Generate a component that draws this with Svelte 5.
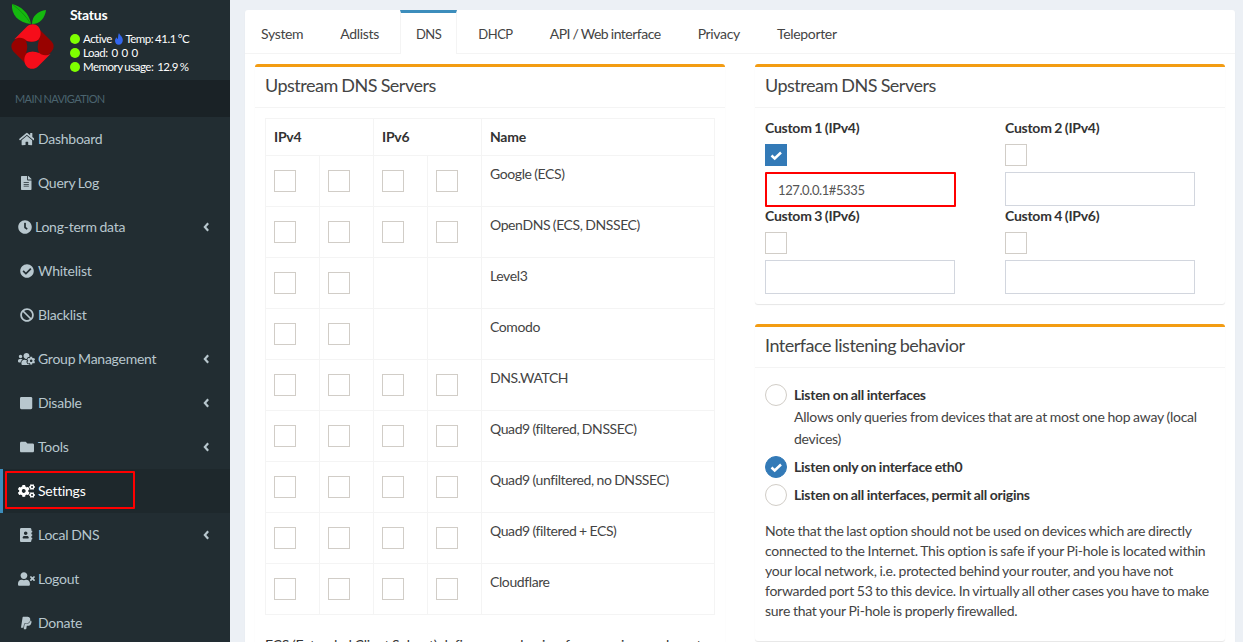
<script>
	const icons = {
		home: ['0 0 576 512', 'M280.37 148.26L96 300.11V464a16 16 0 0 0 16 16l112.06-.29a16 16 0 0 0 15.92-16V368a16 16 0 0 1 16-16h64a16 16 0 0 1 16 16v95.64a16 16 0 0 0 16 16.05L464 480a16 16 0 0 0 16-16V300L295.67 148.26a12.19 12.19 0 0 0-15.3 0zM571.6 251.47L488 182.56V44.05a12 12 0 0 0-12-12h-56a12 12 0 0 0-12 12v72.61L318.47 43a48 48 0 0 0-61 0L4.34 251.47a12 12 0 0 0-1.6 16.9l25.5 31A12 12 0 0 0 45.15 301l235.22-193.74a12.19 12.19 0 0 1 15.3 0L530.9 301a12 12 0 0 0 16.9-1.6l25.5-31a12 12 0 0 0-1.7-16.93z'],
		file: ['0 0 384 512', 'M224 136V0H24C10.7 0 0 10.7 0 24v464c0 13.3 10.7 24 24 24h336c13.3 0 24-10.7 24-24V160H248c-13.2 0-24-10.8-24-24zm64 236c0 6.6-5.4 12-12 12H108c-6.6 0-12-5.4-12-12v-8c0-6.6 5.4-12 12-12h168c6.6 0 12 5.4 12 12v8zm0-64c0 6.6-5.4 12-12 12H108c-6.6 0-12-5.4-12-12v-8c0-6.6 5.4-12 12-12h168c6.6 0 12 5.4 12 12v8zm0-72v8c0 6.6-5.4 12-12 12H108c-6.6 0-12-5.4-12-12v-8c0-6.6 5.4-12 12-12h168c6.6 0 12 5.4 12 12zm96-114.1v6.1H256V0h6.1c6.4 0 12.5 2.5 17 7l97.9 98c4.5 4.5 7 10.6 7 16.9z'],
		clock: ['0 0 512 512', 'M256,8C119,8,8,119,8,256S119,504,256,504,504,393,504,256,393,8,256,8Zm92.49,313h0l-20,25a16,16,0,0,1-22.49,2.5h0l-67-49.72a40,40,0,0,1-15-31.23V112a16,16,0,0,1,16-16h32a16,16,0,0,1,16,16V256l58,42.5A16,16,0,0,1,348.49,321Z'],
		check: ['0 0 512 512', 'M504 256c0 136.967-111.033 248-248 248S8 392.967 8 256 119.033 8 256 8s248 111.033 248 248zM227.314 387.314l184-184c6.248-6.248 6.248-16.379 0-22.627l-22.627-22.627c-6.248-6.249-16.379-6.249-22.628 0L216 308.118l-70.059-70.059c-6.248-6.248-16.379-6.248-22.628 0l-22.627 22.627c-6.248 6.248-6.248 16.379 0 22.627l104 104c6.249 6.249 16.379 6.249 22.628.001z'],
		ban: ['0 0 512 512', 'M256 8C119.034 8 8 119.033 8 256s111.034 248 248 248 248-111.034 248-248S392.967 8 256 8zm130.108 117.892c65.448 65.448 70 165.481 20.677 235.637L150.47 105.216c70.204-49.356 170.226-44.735 235.638 20.676zM125.892 386.108c-65.448-65.448-70-165.481-20.677-235.637L361.53 406.784c-70.203 49.356-170.226 44.736-235.638-20.676z'],
		users: ['0 0 640 512', 'M610.5 341.3c2.6-14.1 2.6-28.5 0-42.6l25.8-14.9c3-1.7 4.3-5.2 3.3-8.5-6.7-21.6-18.2-41.2-33.2-57.4-2.3-2.5-6-3.1-9-1.4l-25.8 14.9c-10.9-9.3-23.4-16.5-36.9-21.3v-29.8c0-3.4-2.4-6.4-5.7-7.1-22.3-5-45-4.8-66.2 0-3.3.7-5.7 3.7-5.7 7.1v29.8c-13.5 4.8-26 12-36.9 21.3l-25.8-14.9c-2.9-1.7-6.7-1.1-9 1.4-15 16.2-26.5 35.8-33.2 57.4-1 3.3.4 6.8 3.3 8.5l25.8 14.9c-2.6 14.1-2.6 28.5 0 42.6l-25.8 14.9c-3 1.7-4.3 5.2-3.3 8.5 6.7 21.6 18.2 41.1 33.2 57.4 2.3 2.5 6 3.1 9 1.4l25.8-14.9c10.9 9.3 23.4 16.5 36.9 21.3v29.8c0 3.4 2.4 6.4 5.7 7.1 22.3 5 45 4.8 66.2 0 3.3-.7 5.7-3.7 5.7-7.1v-29.8c13.5-4.8 26-12 36.9-21.3l25.8 14.9c2.9 1.7 6.7 1.1 9-1.4 15-16.2 26.5-35.8 33.2-57.4 1-3.3-.4-6.8-3.3-8.5l-25.8-14.9zM496 368.5c-26.8 0-48.5-21.8-48.5-48.5s21.8-48.5 48.5-48.5 48.5 21.8 48.5 48.5-21.7 48.5-48.5 48.5zM96 224c35.3 0 64-28.7 64-64s-28.7-64-64-64-64 28.7-64 64 28.7 64 64 64zm224 32c1.9 0 3.7-.5 5.6-.6 8.3-21.7 20.5-42.1 36.3-59.2 7.4-8 17.9-12.6 28.9-12.6 6.9 0 13.7 1.8 19.6 5.3l7.9 4.6c.8-.5 1.6-.9 2.4-1.4 7-14.6 11.2-30.8 11.2-48 0-61.9-50.1-112-112-112S208 82.1 208 144c0 61.9 50.1 112 112 112zm105.2 194.5c-2.3-1.2-4.6-2.6-6.8-3.9-8.2 4.8-15.3 9.8-27.5 9.8-10.9 0-21.4-4.6-28.9-12.6-18.3-19.8-32.3-43.9-40.2-69.6-10.7-34.5 24.9-49.7 25.8-50.3-.1-2.6-.1-5.2 0-7.8l-7.9-4.6c-3.8-2.2-7-5-9.8-8.1-3.3.2-6.5.6-9.8.6-24.6 0-47.6-6-68.5-16h-8.3C179.6 288 128 339.6 128 403.2V432c0 26.5 21.5 48 48 48h255.4c-3.7-6-6.2-12.8-6.2-20.3v-9.2zM173.1 274.6C161.5 263.1 145.6 256 128 256H64c-35.3 0-64 28.7-64 64v32c0 17.7 14.3 32 32 32h65.9c6.3-47.4 34.9-87.3 75.2-109.4z'],
		stop: ['0 0 448 512', 'M400 32H48C21.5 32 0 53.5 0 80v352c0 26.5 21.5 48 48 48h352c26.5 0 48-21.5 48-48V80c0-26.5-21.5-48-48-48z'],
		folder: ['0 0 512 512', 'M464 128H272l-64-64H48C21.49 64 0 85.49 0 112v288c0 26.51 21.49 48 48 48h416c26.51 0 48-21.49 48-48V176c0-26.51-21.49-48-48-48z'],
		cogs: ['0 0 640 512', 'M512.1 191l-8.2 14.3c-3 5.3-9.4 7.5-15.1 5.4-11.8-4.4-22.6-10.7-32.1-18.6-4.6-3.8-5.8-10.5-2.8-15.7l8.2-14.3c-6.9-8-12.3-17.3-15.9-27.4h-16.5c-6 0-11.2-4.3-12.2-10.3-2-12-2.1-24.6 0-37.1 1-6 6.2-10.4 12.2-10.4h16.5c3.6-10.1 9-19.4 15.9-27.4l-8.2-14.3c-3-5.2-1.9-11.9 2.8-15.7 9.5-7.9 20.4-14.2 32.1-18.6 5.7-2.1 12.1.1 15.1 5.4l8.2 14.3c10.5-1.9 21.2-1.9 31.7 0L552 6.3c3-5.3 9.4-7.5 15.1-5.4 11.8 4.4 22.6 10.7 32.1 18.6 4.6 3.8 5.8 10.5 2.8 15.7l-8.2 14.3c6.9 8 12.3 17.3 15.9 27.4h16.5c6 0 11.2 4.3 12.2 10.3 2 12 2.1 24.6 0 37.1-1 6-6.2 10.4-12.2 10.4h-16.5c-3.6 10.1-9 19.4-15.9 27.4l8.2 14.3c3 5.2 1.9 11.9-2.8 15.7-9.5 7.9-20.4 14.2-32.1 18.6-5.7 2.1-12.1-.1-15.1-5.4l-8.2-14.3c-10.4 1.9-21.2 1.9-31.7 0zm-10.5-58.8c38.5 29.6 82.4-14.3 52.8-52.8-38.5-29.7-82.4 14.3-52.8 52.8zM386.3 286.1l33.7 16.8c10.1 5.8 14.5 18.1 10.5 29.1-8.9 24.2-26.4 46.4-42.6 65.8-7.4 8.9-20.2 11.1-30.3 5.3l-29.1-16.8c-16 13.7-34.6 24.6-54.9 31.7v33.6c0 11.6-8.3 21.6-19.7 23.6-24.6 4.2-50.4 4.4-75.9 0-11.5-2-20-11.9-20-23.6V418c-20.3-7.2-38.9-18-54.9-31.7L74 403c-10 5.8-22.9 3.6-30.3-5.3-16.2-19.4-33.3-41.6-42.2-65.7-4-10.9.4-23.2 10.5-29.1l33.3-16.8c-3.9-20.9-3.9-42.4 0-63.4L12 205.8c-10.1-5.8-14.6-18.1-10.5-29 8.9-24.2 26-46.4 42.2-65.8 7.4-8.9 20.2-11.1 30.3-5.3l29.1 16.8c16-13.7 34.6-24.6 54.9-31.7V57.1c0-11.5 8.2-21.5 19.6-23.5 24.6-4.2 50.5-4.4 76-.1 11.5 2 20 11.9 20 23.6v33.6c20.3 7.2 38.9 18 54.9 31.7l29.1-16.8c10-5.8 22.9-3.6 30.3 5.3 16.2 19.4 33.2 41.6 42.1 65.8 4 10.9.1 23.2-10 29.1l-33.7 16.8c3.9 21 3.9 42.5 0 63.5zm-117.6 21.1c59.2-77-28.7-164.9-105.7-105.7-59.2 77 28.7 164.9 105.7 105.7zm243.4 182.7l-8.2 14.3c-3 5.3-9.4 7.5-15.1 5.4-11.8-4.4-22.6-10.7-32.1-18.6-4.6-3.8-5.8-10.5-2.8-15.7l8.2-14.3c-6.9-8-12.3-17.3-15.9-27.4h-16.5c-6 0-11.2-4.3-12.2-10.3-2-12-2.1-24.6 0-37.1 1-6 6.2-10.4 12.2-10.4h16.5c3.6-10.1 9-19.4 15.9-27.4l-8.2-14.3c-3-5.2-1.9-11.9 2.8-15.7 9.5-7.9 20.4-14.2 32.1-18.6 5.7-2.1 12.1.1 15.1 5.4l8.2 14.3c10.5-1.9 21.2-1.9 31.7 0l8.2-14.3c3-5.3 9.4-7.5 15.1-5.4 11.8 4.4 22.6 10.7 32.1 18.6 4.6 3.8 5.8 10.5 2.8 15.7l-8.2 14.3c6.9 8 12.3 17.3 15.9 27.4h16.5c6 0 11.2 4.3 12.2 10.3 2 12 2.1 24.6 0 37.1-1 6-6.2 10.4-12.2 10.4h-16.5c-3.6 10.1-9 19.4-15.9 27.4l8.2 14.3c3 5.2 1.9 11.9-2.8 15.7-9.5 7.9-20.4 14.2-32.1 18.6-5.7 2.1-12.1-.1-15.1-5.4l-8.2-14.3c-10.4 1.9-21.2 1.9-31.7 0zM501.6 431c38.5 29.6 82.4-14.3 52.8-52.8-38.5-29.6-82.4 14.3-52.8 52.8z'],
		book: ['0 0 448 512', 'M436 160c6.6 0 12-5.4 12-12v-40c0-6.6-5.4-12-12-12h-20V48c0-26.5-21.5-48-48-48H48C21.5 0 0 21.5 0 48v416c0 26.5 21.5 48 48 48h320c26.5 0 48-21.5 48-48v-48h20c6.6 0 12-5.4 12-12v-40c0-6.6-5.4-12-12-12h-20v-64h20c6.6 0 12-5.4 12-12v-40c0-6.6-5.4-12-12-12h-20v-64h20zm-228-32c35.3 0 64 28.7 64 64s-28.7 64-64 64-64-28.7-64-64 28.7-64 64-64zm112 236.8c0 10.6-10 19.2-22.4 19.2H118.4C106 384 96 375.4 96 364.8v-19.2c0-31.8 30.1-57.6 67.2-57.6h5c12.3 5.1 25.7 8 39.8 8s27.6-2.9 39.8-8h5c37.1 0 67.2 25.8 67.2 57.6v19.2z'],
		logout: ['0 0 640 512', 'M589.6 240l45.6-45.6c6.3-6.3 6.3-16.5 0-22.8l-22.8-22.8c-6.3-6.3-16.5-6.3-22.8 0L544 194.4l-45.6-45.6c-6.3-6.3-16.5-6.3-22.8 0L452.8 171.6c-6.3 6.3-6.3 16.5 0 22.8l45.6 45.6-45.6 45.6c-6.3 6.3-6.3 16.5 0 22.8l22.8 22.8c6.3 6.3 16.5 6.3 22.8 0l45.6-45.6 45.6 45.6c6.3 6.3 16.5 6.3 22.8 0l22.8-22.8c6.3-6.3 6.3-16.5 0-22.8L589.6 240zM224 256c70.7 0 128-57.3 128-128S294.7 0 224 0 96 57.3 96 128s57.3 128 128 128zm89.6 32h-16.7c-22.2 10.2-46.9 16-72.9 16s-50.6-5.8-72.9-16h-16.7C60.2 288 0 348.2 0 422.4V464c0 26.5 21.5 48 48 48h352c26.5 0 48-21.5 48-48v-41.6c0-74.2-60.2-134.4-134.4-134.4z'],
		paypal: ['0 0 384 512', 'M111.4 295.9c-3.5 19.2-17.4 108.7-21.5 134-.3 1.8-1 2.5-3 2.5H12.3c-7.6 0-13.1-6.6-12.1-13.9L58.8 46.6c1.5-9.6 10.1-16.9 20-16.9 152.3 0 165.1-3.7 204 11.4 60.1 23.3 65.6 79.5 44 140.3-21.5 62.6-72.5 89.5-140.1 90.3-43.4.7-69.5-7-75.3 24.2zM357.1 152c-1.8-1.3-2.5-1.8-3 1.3-2 11.4-5.1 22.5-8.8 33.6-39.9 113.8-150.5 103.9-204.5 103.9-6.1 0-10.1 3.3-10.9 9.4-22.6 140.4-27.1 169.7-27.1 169.7-1 7.1 3.5 12.9 10.6 12.9h63.5c8.6 0 15.7-6.3 17.4-14.9.7-5.4-1.1 6.1 14.4-91.3 4.6-22 14.3-19.7 29.3-19.7 71 0 126.4-28.8 142.9-112.3 6.5-34.8 4.6-71.4-23.8-92.6z']
	}

	const nav = [
		{ label: 'Dashboard', icon: 'home' },
		{ label: 'Query Log', icon: 'file' },
		{ label: 'Long-term data', icon: 'clock', more: true, narrow: true },
		{ label: 'Whitelist', icon: 'check' },
		{ label: 'Blacklist', icon: 'ban' },
		{ label: 'Group Management', icon: 'users', more: true },
		{ label: 'Disable', icon: 'stop', more: true },
		{ label: 'Tools', icon: 'folder', more: true },
		{ label: 'Settings', icon: 'cogs', active: true },
		{ label: 'Local DNS', icon: 'book', more: true },
		{ label: 'Logout', icon: 'logout' },
		{ label: 'Donate', icon: 'paypal' }
	]

	const tabs = [
		{ label: 'System' },
		{ label: 'Adlists' },
		{ label: 'DNS', caps: true },
		{ label: 'DHCP', caps: true },
		{ label: 'API / Web interface', tight: true },
		{ label: 'Privacy' },
		{ label: 'Teleporter' }
	]

	const servers = [
		['Google (ECS)', true],
		['OpenDNS (ECS, DNSSEC)', true],
		['Level3', false],
		['Comodo', false],
		['DNS.WATCH', true],
		['Quad9 (filtered, DNSSEC)', true],
		['Quad9 (unfiltered, no DNSSEC)', true],
		['Quad9 (filtered + ECS)', true],
		['Cloudflare', true]
	]

	const customs = [
		{ label: 'Custom 1 (IPv4)', value: '127.0.0.1#5335', on: true },
		{ label: 'Custom 2 (IPv4)', value: '' },
		{ label: 'Custom 3 (IPv6)', value: '' },
		{ label: 'Custom 4 (IPv6)', value: '' }
	]
</script>

<div class="page">
	<aside class="sidebar">
		<div class="panel">
			<svg class="logo" viewBox="0 0 60 76" aria-hidden="true">
				<path d="M31 24C29 13 21 6 12 4c-1 10 6 19 19 20z" fill="#15b80f" />
				<path d="M31 24C26 16 20 10 12 4" fill="none" stroke="#0b8a09" stroke-width=".7" />
				<path d="M32 24c8 0 13-6 14-14-8 1-14 6-14 14z" fill="#15b80f" />
				<rect x="15.500" y="29.500" width="34" height="34" rx="7" transform="rotate(45 32.500 46.500)" fill="#980200" />
				<path d="M14.300 39.300L27 26.500c3-3 8.500-3.200 11-.3 3.600 4 3.500 10.200 0 13.800-3 2.600-7 2-11 1-4.500-4-8-4-12.700-1.700z" fill="#f60d1a" />
				<path d="M14.300 39.300L27 26.500c3-3 8.500-3.200 11-.3 3.600 4 3.500 10.200 0 13.800-3 2.600-7 2-11 1-4.500-4-8-4-12.700-1.700z" fill="#f60d1a" transform="rotate(180 32.500 46.500)" />
				<path d="M26 41Q32 43.500 39 40 36.500 46.500 39 53 33 50 26 53 28.500 47 26 41z" fill="#222d32" />
			</svg>
			<div class="status">
				<p class="status-title">Status</p>
				<p><i class="dot"></i>Active
					<svg class="flame" viewBox="0 0 10 12" aria-hidden="true"><path d="M5 0c.5 2 3.800 3.600 3.800 7.200C8.800 9.800 7 11.800 4.800 11.800 2.600 11.800 1 10 1 7.700 1 6.200 1.800 5 2.800 4.200c0 1 .4 1.600 1 1.800C4.200 4 4 2 5 0z" fill="#3366ee" /></svg>
					Temp: 41.1 °C</p>
				<p><i class="dot"></i>Load:&nbsp; 0&nbsp; 0&nbsp; 0</p>
				<p><i class="dot"></i>Memory usage:&nbsp; 12.9 %</p>
			</div>
		</div>
		<div class="nav-head">MAIN NAVIGATION</div>
		<nav>
			{#each nav as item}
				<div class="nav-item" class:active={item.active}>
					<span class="nav-icon" class:narrow={item.narrow}>
						<svg viewBox={icons[item.icon][0]} aria-hidden="true"><path d={icons[item.icon][1]} fill="currentColor" /></svg>
					</span>
					<span class="nav-label" class:boxed={item.active}>{item.label}</span>
					{#if item.more}
						<svg class="chev" viewBox="0 0 8 12" aria-hidden="true"><path d="M6 1.500L2 6l4 4.500" fill="none" stroke="currentColor" stroke-width="2.600" /></svg>
					{/if}
				</div>
			{/each}
		</nav>
	</aside>

	<main class="content">
		<div class="card">
			<ul class="tabs">
				{#each tabs as tab}
					<li class:current={tab.label === 'DNS'} class:caps={tab.caps} class:tight={tab.tight}>{tab.label}</li>
				{/each}
			</ul>
			<div class="columns">
				<section class="box">
					<h3>Upstream DNS Servers</h3>
					<div class="box-body">
						<table>
							<colgroup>
								<col class="narrow-col" /><col class="narrow-col" /><col class="narrow-col" /><col class="narrow-col" /><col />
							</colgroup>
							<thead>
								<tr><th colspan="2">IPv4</th><th colspan="2">IPv6</th><th>Name</th></tr>
							</thead>
							<tbody>
								{#each servers as [name, six]}
									<tr>
										<td><span class="tick"></span></td>
										<td><span class="tick"></span></td>
										<td>{#if six}<span class="tick"></span>{/if}</td>
										<td>{#if six}<span class="tick"></span>{/if}</td>
										<td class="name">{name}</td>
									</tr>
								{/each}
							</tbody>
						</table>
						<p class="ecs">ECS (Extended Client Subnet) defines a mechanism for recursive resolvers to send partial client IP address information to authoritative DNS name servers.</p>
					</div>
				</section>

				<div class="stack">
					<section class="box">
						<h3>Upstream DNS Servers</h3>
						<div class="box-body customs">
							{#each customs as c}
								<div class="custom">
									<strong>{c.label}</strong>
									<span class="tick" class:on={c.on}>
										{#if c.on}<svg viewBox="0 0 22 22" aria-hidden="true"><path d="M6.500 11.500l3.200 3L16 8.500" fill="none" stroke="#fff" stroke-width="2.500" /></svg>{/if}
									</span>
									<input type="text" value={c.value} class:marked={c.on} />
								</div>
							{/each}
						</div>
					</section>

					<section class="box">
						<h3>Interface listening behavior</h3>
						<div class="box-body listen">
							<div class="radio">
								<span class="tick round"></span>
								<div><strong>Listen on all interfaces</strong><br />Allows only queries from devices that are at most one hop away (local devices)</div>
							</div>
							<div class="radio">
								<span class="tick round on">
									<svg viewBox="0 0 22 22" aria-hidden="true"><path d="M6.500 11.500l3.200 3L16 8.500" fill="none" stroke="#fff" stroke-width="2.500" /></svg>
								</span>
								<div><strong>Listen only on interface eth0</strong></div>
							</div>
							<div class="radio">
								<span class="tick round"></span>
								<div><strong>Listen on all interfaces, permit all origins</strong></div>
							</div>
							<p>Note that the last option should not be used on devices which are directly connected to the Internet. This option is safe if your Pi-hole is located within your local network, i.e. protected behind your router, and you have not forwarded port 53 to this device. In virtually all other cases you have to make sure that your Pi-hole is properly firewalled.</p>
						</div>
					</section>
				</div>
			</div>
		</div>
	</main>
</div>

<style>
	:global(body) {
		margin: 0;
		overflow: hidden;
	}
	.page {
		display: flex;
		height: 642px;
		overflow: hidden;
		background: #ecf0f5;
		font-family: Lato, "Liberation Sans", sans-serif;
		font-size: 14px;
		line-height: 20px;
		letter-spacing: -0.25px;
		word-spacing: -0.5px;
		color: #333;
	}
	.sidebar {
		width: 230px;
		flex: none;
		background: #222d32;
		color: #b8c7ce;
	}
	.panel {
		display: flex;
		height: 80px;
		box-sizing: border-box;
	}
	.logo {
		width: 60px;
		height: 76px;
		flex: none;
	}
	.status {
		margin-left: 10px;
		padding-top: 5px;
		color: #fff;
		font-size: 11.5px;
		line-height: 14px;
		letter-spacing: -0.5px;
	}
	.status p {
		margin: 0;
		white-space: nowrap;
	}
	.status .status-title {
		font-size: 14px;
		font-weight: 700;
		line-height: 20px;
		margin-bottom: 7px;
		letter-spacing: -0.25px;
	}
	.dot {
		display: inline-block;
		width: 10px;
		height: 10px;
		margin-right: 3px;
		border-radius: 50%;
		background: #7fff00;
		vertical-align: -1px;
	}
	.flame {
		width: 10px;
		height: 12px;
		vertical-align: -2px;
	}
	.nav-head {
		height: 37px;
		padding-left: 15px;
		background: #1a2226;
		color: #4b646f;
		font-size: 11px;
		letter-spacing: -0.6px;
		line-height: 37px;
	}
	.nav-item {
		display: flex;
		align-items: center;
		height: 44px;
		box-sizing: border-box;
		padding: 0 20px 0 18px;
		position: relative;
	}
	.nav-item.active {
		background: #1e282c;
		color: #fff;
		box-shadow: inset 3px 0 0 #3c8dbc;
	}
	.nav-icon {
		display: flex;
		justify-content: center;
		width: 17px;
		margin-right: 3px;
	}
	.nav-icon.narrow {
		width: 14px;
	}
	.nav-icon svg {
		height: 14px;
		max-width: 18px;
		display: block;
	}
	.nav-label.boxed::before {
		content: '';
		position: absolute;
		left: 5px;
		top: 2px;
		width: 126px;
		height: 34px;
		border: 2px solid #f00;
		border-radius: 1px;
	}
	.chev {
		width: 7px;
		height: 10px;
		margin-left: auto;
	}
	.content {
		flex: 1;
		min-width: 0;
		padding: 10px 8px 0 15px;
	}
	.card {
		background: #fff;
		border-radius: 3px 3px 0 0;
		box-shadow: 0 1px 1px rgba(0, 0, 0, .1);
	}
	.tabs {
		display: flex;
		height: 44px;
		box-sizing: border-box;
		margin: 0;
		padding: 0;
		list-style: none;
		border-bottom: 1px solid #f4f4f4;
	}
	.tabs li {
		margin-right: 5px;
		padding: 14px 16px 0;
		height: 44px;
		box-sizing: border-box;
		color: #444;
		letter-spacing: -0.33px;
	}
	.tabs li.tight {
		letter-spacing: -0.5px;
	}
	.tabs li.caps {
		font-size: 13px;
		letter-spacing: -0.5px;
	}
	.tabs li.current {
		border-top: 3px solid #3c8dbc;
		border-left: 1px solid #f4f4f4;
		border-right: 1px solid #f4f4f4;
		padding: 11px 15px 0;
		background: #fff;
	}
	.columns {
		display: grid;
		grid-template-columns: 470px 470px;
		gap: 30px;
		padding: 10px;
	}
	.stack {
		display: flex;
		flex-direction: column;
		gap: 20px;
	}
	.box {
		border-top: 3px solid #f39c12;
		border-radius: 3px;
		background: #fff;
		box-shadow: 0 1px 1px rgba(0, 0, 0, .1);
	}
	h3 {
		margin: 0;
		padding: 8px 10px 0;
		height: 41px;
		box-sizing: border-box;
		font-size: 18px;
		font-weight: 400;
		line-height: 20px;
		letter-spacing: -0.5px;
		color: #444;
		border-bottom: 1px solid #f4f4f4;
	}
	.box-body {
		padding: 10px;
	}
	table {
		width: 450px;
		table-layout: fixed;
		border-collapse: collapse;
		border: 1px solid #f4f4f4;
	}
	.narrow-col {
		width: 54px;
	}
	th, td {
		box-sizing: border-box;
		padding: 8px;
		border: 1px solid #f4f4f4;
		text-align: left;
		vertical-align: top;
	}
	th {
		height: 37px;
		font-weight: 700;
	}
	td {
		height: 51px;
	}
	td.name {
		letter-spacing: -0.4px;
		color: #444;
	}
	.tick {
		display: block;
		width: 22px;
		height: 22px;
		box-sizing: border-box;
		margin-top: 6px;
		border: 1px solid #d1cdc7;
		background: #fff;
	}
	.tick svg {
		display: block;
		width: 22px;
		height: 22px;
		margin: -1px;
	}
	.tick.on {
		border-color: #337ab7;
		background: #337ab7;
	}
	.tick.round {
		flex: none;
		margin: 0;
		border-radius: 50%;
	}
	.ecs {
		margin: 20px 0 0;
	}
	.customs {
		display: grid;
		grid-template-columns: 190px 190px;
		column-gap: 50px;
	}
	.custom {
		height: 88px;
	}
	.custom strong {
		display: block;
		height: 20px;
		line-height: 20px;
	}
	.custom .tick {
		margin-top: 6px;
	}
	input {
		display: block;
		width: 190px;
		height: 34px;
		box-sizing: border-box;
		margin-top: 6px;
		padding: 6px 12px;
		border: 1px solid #d2d6de;
		border-radius: 0;
		outline: none;
		font: inherit;
		letter-spacing: inherit;
		color: #555;
	}
	input.marked {
		border: 2px solid #f00;
		border-radius: 1px;
		width: 191px;
		height: 35px;
		padding-left: 11px;
		font-size: 13px;
		letter-spacing: -0.4px;
	}
	.listen {
		padding-top: 16px;
		padding-bottom: 20px;
	}
	.radio {
		display: flex;
		gap: 7px;
		margin-bottom: 6px;
		line-height: 22px;
		color: #444;
	}
	.radio strong {
		color: #333;
	}
	.radio:last-of-type {
		margin-bottom: 15px;
	}
	.listen p {
		margin: 0;
		color: #444;
	}
</style>
